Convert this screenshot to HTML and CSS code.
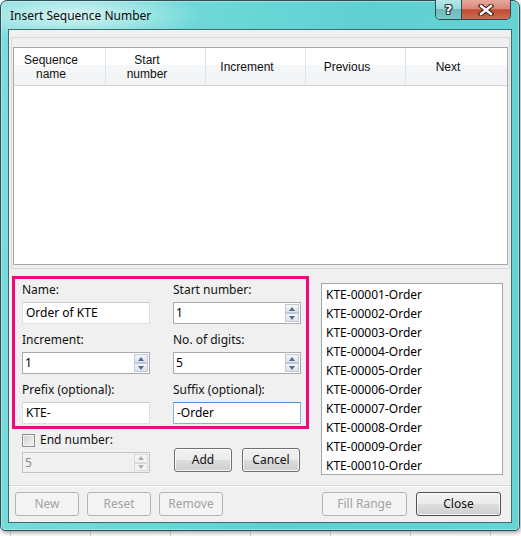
FILE: index.html
```html
<!DOCTYPE html>
<html lang="en">
<head>
<meta charset="utf-8">
<title>Insert Sequence Number</title>
<link rel="stylesheet" href="styles.css">
</head>
<body>
<div class="window">
  <div class="titlebar">
    <span class="title">Insert Sequence Number</span>
    <div class="caption-buttons">
      <span class="cap-btn help">?</span>
      <span class="cap-btn close">
        <svg width="18" height="12" viewBox="0 0 18 12">
          <path d="M4 2 L14 10 M14 2 L4 10" stroke="#3a1e18" stroke-width="4.6" stroke-linecap="square"/>
          <path d="M4 2 L14 10 M14 2 L4 10" stroke="#ffffff" stroke-width="2.4" stroke-linecap="square"/>
        </svg>
      </span>
    </div>
  </div>

  <div class="client">
    <div class="panel">
      <div class="listview">
        <div class="lv-header">
          <div class="lv-col"><span class="ln">Sequence</span><span class="ln">name</span></div>
          <div class="lv-col"><span class="ln">Start</span><span class="ln">number</span></div>
          <div class="lv-col">Increment</div>
          <div class="lv-col">Previous</div>
          <div class="lv-col last">Next</div>
        </div>
      </div>
    </div>

    <div class="middle">
      <div class="left-col">
        <div class="settings">
          <div class="field">
            <span class="label">Name:</span>
            <div class="textbox">Order of KTE</div>
          </div>
          <div class="field">
            <span class="label">Start number:</span>
            <div class="spin">
              <span class="value">1</span>
              <span class="spin-btns"><span class="sb up"></span><span class="sb down"></span></span>
            </div>
          </div>
          <div class="field">
            <span class="label">Increment:</span>
            <div class="spin">
              <span class="value">1</span>
              <span class="spin-btns"><span class="sb up"></span><span class="sb down"></span></span>
            </div>
          </div>
          <div class="field">
            <span class="label">No. of digits:</span>
            <div class="spin">
              <span class="value">5</span>
              <span class="spin-btns"><span class="sb up"></span><span class="sb down"></span></span>
            </div>
          </div>
          <div class="field">
            <span class="label">Prefix (optional):</span>
            <div class="textbox">KTE-</div>
          </div>
          <div class="field">
            <span class="label">Suffix (optional):</span>
            <div class="textbox focused">-Order</div>
          </div>
        </div>

        <div class="end-area">
          <div class="end-col">
            <div class="check-row">
              <span class="checkbox"></span>
              <span class="check-label">End number:</span>
            </div>
            <div class="spin disabled">
              <span class="value">5</span>
              <span class="spin-btns"><span class="sb up"></span><span class="sb down"></span></span>
            </div>
          </div>
          <div class="end-buttons">
            <span class="btn small">Add</span>
            <span class="btn small">Cancel</span>
          </div>
        </div>
      </div>

      <div class="preview">
        <div class="item">KTE-00001-Order</div>
        <div class="item">KTE-00002-Order</div>
        <div class="item">KTE-00003-Order</div>
        <div class="item">KTE-00004-Order</div>
        <div class="item">KTE-00005-Order</div>
        <div class="item">KTE-00006-Order</div>
        <div class="item">KTE-00007-Order</div>
        <div class="item">KTE-00008-Order</div>
        <div class="item">KTE-00009-Order</div>
        <div class="item">KTE-00010-Order</div>
      </div>
    </div>

    <div class="footer">
      <div class="btn-group left">
        <span class="btn wide disabled">New</span>
        <span class="btn wide disabled">Reset</span>
        <span class="btn wide disabled">Remove</span>
      </div>
      <div class="btn-group right">
        <span class="btn wider disabled">Fill Range</span>
        <span class="btn wider default">Close</span>
      </div>
    </div>
  </div>
</div>
</body>
</html>
```

FILE: styles.css
```css
* {
  box-sizing: border-box;
}

html,
body {
  margin: 0;
}

body {
  width: 521px;
  height: 536px;
  overflow: hidden;
  font-family: "Noto Sans", "Open Sans", sans-serif;
  font-size: 12px;
  color: #000;
  /* worksheet grid lines peeking out behind the dialog */
  background:
    repeating-linear-gradient(90deg, transparent 0 10px, #dadada 10px 11px, transparent 11px 80px),
    #ffffff;
}

/* ---------- window frame ---------- */
.window {
  width: 520px;
  height: 531px;
  border: 1px solid #2e4d54;
  border-radius: 7px 7px 5px 5px;
  padding: 0 7px 7px;
  display: flex;
  flex-direction: column;
  background:
    radial-gradient(ellipse 130px 26px at 72px 14px, rgba(255, 255, 255, 0.7), rgba(255, 255, 255, 0) 100%),
    linear-gradient(100deg, #7edcdc 0%, #6ad7d7 40%, #5fd0d0 60%, #66d4d4 100%);
  box-shadow: 1px 2px 4px rgba(0, 0, 0, 0.35), inset 0 0 0 1px rgba(255, 255, 255, 0.35);
}

.titlebar {
  height: 28px;
  flex: none;
  display: flex;
  justify-content: space-between;
  align-items: flex-start;
}

.title {
  margin: 7px 0 0 2px;
  line-height: 16px;
  color: #0b0b0b;
}

.caption-buttons {
  display: flex;
  margin: -1px 1px 0 0;
  height: 20px;
  border: 1px solid #2c4a50;
  border-top: none;
  border-radius: 0 0 5px 5px;
  overflow: hidden;
}

.cap-btn {
  display: flex;
  align-items: center;
  justify-content: center;
  height: 100%;
}

.cap-btn.help {
  width: 26px;
  border-right: 1px solid #2c4a50;
  background: linear-gradient(#b7e6e6 0%, #9ed9d9 45%, #6fbcbc 50%, #7cc7c7 100%);
  color: #fff;
  font-family: "DejaVu Sans", sans-serif;
  font-weight: bold;
  font-size: 13px;
  line-height: 1;
  text-shadow:
    1px 0 0 #1f3c40, -1px 0 0 #1f3c40, 0 1px 0 #1f3c40, 0 -1px 0 #1f3c40,
    1px 1px 0 #1f3c40, -1px -1px 0 #1f3c40, 1px -1px 0 #1f3c40, -1px 1px 0 #1f3c40;
}

.cap-btn.close {
  width: 48px;
  background: linear-gradient(#e6a99e 0%, #d88878 45%, #c24a32 52%, #d16c55 100%);
}

/* ---------- client area ---------- */
.client {
  flex: 1;
  border: 1px solid #3e6b70;
  background: #f0f0f0;
  display: flex;
  flex-direction: column;
}

.panel {
  height: 232px;
  margin: 7px 1px 0 2px;
  border: 1px solid #d9d9d9;
  padding: 9px 1px 3px 1px;
  flex: none;
}

.listview {
  height: 218px;
  border: 1px solid #a3a7ad;
  background: #fff;
}

.lv-header {
  height: 38px;
  display: grid;
  grid-template-columns: 92px 100px 100px 100px 1fr;
  border-bottom: 1px solid #d5d5d5;
  background: linear-gradient(#ffffff 0%, #ffffff 45%, #f6f7f9 45%, #f2f3f5 100%);
  font-family: "Liberation Sans", Arial, sans-serif;
}

.lv-col {
  display: flex;
  flex-direction: column;
  align-items: center;
  justify-content: center;
  text-align: center;
  line-height: 14px;
  padding-right: 17px;
  border-right: 1px solid #e1e4e8;
  color: #111;
}

.lv-col .ln {
  display: block;
  line-height: 14px;
}

.lv-col.last {
  border-right: none;
}

/* ---------- settings + preview ---------- */
.middle {
  height: 216px;
  flex: none;
  display: flex;
  align-items: flex-start;
}

.left-col {
  width: 297px;
  margin: 7px 0 0 3px;
}

.settings {
  height: 153px;
  border: 3px solid #f4067d;
  padding: 3px 5px 2px 7px;
  display: grid;
  grid-template-columns: 128px 128px;
  column-gap: 23px;
  row-gap: 8px;
  align-content: start;
}

.field {
  display: flex;
  flex-direction: column;
}

.label {
  line-height: 16px;
  margin-bottom: 4px;
  color: #111;
}

.textbox {
  height: 22px;
  border: 1px solid #dcdfe4;
  border-top-color: #c9ccd2;
  background: #fff;
  padding: 0 3px;
  line-height: 20px;
}

.textbox.focused {
  border-color: #7fb4e8;
  border-top-color: #4e8fd0;
}

.spin {
  height: 22px;
  border: 1px solid #a9abaf;
  background: #fff;
  display: flex;
}

.spin .value {
  flex: 1;
  padding-left: 2px;
  line-height: 20px;
}

.spin-btns {
  width: 14px;
  margin: 1px 1px 1px 0;
  display: flex;
  flex-direction: column;
}

.sb {
  flex: 1;
  border: 1px solid #c2c9d3;
  background: linear-gradient(#f3f5f9, #dde3eb);
  display: flex;
  align-items: center;
  justify-content: center;
}

.sb::after {
  content: "";
  width: 0;
  height: 0;
  border-left: 3.5px solid transparent;
  border-right: 3.5px solid transparent;
}

.sb.up::after {
  border-bottom: 4px solid #526b92;
}

.sb.down::after {
  border-top: 4px solid #526b92;
}

.spin.disabled {
  height: 21px;
  border-color: #c4c4c4;
  background: #f0f0f0;
  color: #8a8a8a;
}

.spin.disabled .value {
  line-height: 19px;
}

.spin.disabled .sb {
  border-color: #dadada;
  background: #f3f3f3;
}

.spin.disabled .sb.up::after {
  border-bottom-color: #b0b0b0;
}

.spin.disabled .sb.down::after {
  border-top-color: #b0b0b0;
}

.end-area {
  display: flex;
  margin-top: 4px;
}

.end-col {
  width: 128px;
  margin-left: 10px;
  display: flex;
  flex-direction: column;
}

.check-row {
  height: 14px;
  display: flex;
  align-items: center;
  margin-bottom: 5px;
}

.checkbox {
  width: 13px;
  height: 13px;
  border: 1px solid #8e8f8f;
  background: linear-gradient(135deg, #cdd0d4, #f4f4f4);
  box-shadow: inset 0 0 0 1px #f2f2f2;
}

.check-label {
  margin-left: 5px;
  line-height: 16px;
  color: #111;
}

.end-buttons {
  display: flex;
  gap: 10px;
  margin-left: 24px;
  align-self: flex-end;
  margin-bottom: 1px;
}

/* ---------- buttons ---------- */
.btn {
  height: 24px;
  border: 1px solid #707070;
  border-radius: 3px;
  background: linear-gradient(#f2f2f2 0%, #ebebeb 50%, #dddddd 50%, #cfcfcf 100%);
  box-shadow: inset 0 0 0 1px rgba(255, 255, 255, 0.75);
  display: flex;
  align-items: center;
  justify-content: center;
  line-height: 16px;
  color: #111;
}

.btn.small {
  width: 58px;
}

.btn.wide {
  width: 64px;
}

.btn.wider {
  width: 85px;
}

.btn.default {
  border-color: #4f4f4f;
}

.btn.disabled {
  border-color: #b3b6b8;
  background: #f4f4f4;
  box-shadow: none;
  color: #a2a2a2;
}

.preview {
  width: 182px;
  height: 192px;
  margin: 14px 0 0 12px;
  border: 1px solid #a6a6a6;
  background: #fff;
  padding: 1px 0 0 4px;
  overflow: hidden;
}

.item {
  line-height: 19px;
  white-space: nowrap;
}

/* ---------- footer ---------- */
.footer {
  flex: 1;
  border-top: 1px solid #d7d7d7;
  box-shadow: inset 0 1px 0 #ffffff;
  padding: 6px 10px 0 6px;
  display: flex;
  justify-content: space-between;
  align-items: flex-start;
}

.btn-group {
  display: flex;
}

.btn-group.left {
  gap: 8px;
}

.btn-group.right {
  gap: 9px;
}
```
